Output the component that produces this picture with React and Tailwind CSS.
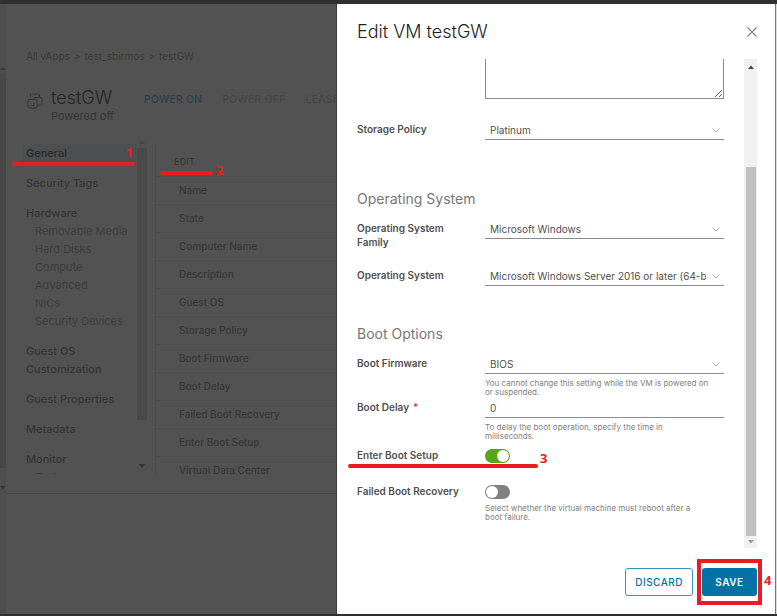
import { useState } from "react";

const navItems = [
  { label: "General", active: true },
  { label: "Security Tags" },
  {
    label: "Hardware",
    children: [
      "Removable Media",
      "Hard Disks",
      "Compute",
      "Advanced",
      "NICs",
      "Security Devices",
    ],
  },
  { label: "Guest OS Customization" },
  { label: "Guest Properties" },
  { label: "Metadata" },
  { label: "Monitor", children: ["Tasks"] },
];

const properties = [
  "Name",
  "State",
  "Computer Name",
  "Description",
  "Guest OS",
  "Storage Policy",
  "Boot Firmware",
  "Boot Delay",
  "Failed Boot Recovery",
  "Enter Boot Setup",
  "Virtual Data Center",
];

function Arrow({ down = false, className = "" }) {
  return (
    <svg viewBox="0 0 6 4" className={`h-1 w-1.5 ${className}`} fill="currentColor">
      <path d={down ? "M0 0h6L3 3.5z" : "M0 4h6L3 0.5z"} />
    </svg>
  );
}

function StepNumber({ children, className }) {
  return (
    <span
      className={`absolute font-['Open_Sans',sans-serif] text-[13px] leading-4 font-bold text-[#e81c24] ${className}`}
    >
      {children}
    </span>
  );
}

function SideNav() {
  return (
    <div className="flex h-[334px] w-[141px] overflow-hidden">
      <nav className="flex-1 pt-1">
        <ul className="space-y-3 text-[11px] leading-[18px] font-medium text-[#363636]">
          {navItems.map((item) => (
            <li key={item.label} className="relative">
              <a
                href="#"
                className={
                  item.active
                    ? "ml-4 block bg-[#4d4f50] pl-1 text-[#2a2a2a]"
                    : "ml-4 block pr-4 pl-1"
                }
              >
                {item.label}
              </a>
              {item.active && (
                <>
                  <span className="absolute -bottom-1 left-1.5 h-1 w-[123px] rounded-full bg-[#e81c24]" />
                  <StepNumber className="right-1 top-0">1</StepNumber>
                </>
              )}
              {item.children && (
                <ul className="pl-[29px] font-normal whitespace-nowrap text-[#3e3e3e]">
                  {item.children.map((child) => (
                    <li key={child}>
                      <a href="#">{child}</a>
                    </li>
                  ))}
                </ul>
              )}
            </li>
          ))}
        </ul>
      </nav>
      {/* Scrollbar */}
      <div className="flex w-2.5 flex-col items-center justify-between text-[#333]">
        <Arrow className="mb-1 text-[#454545]" />
        <div className="w-full flex-1 bg-[#494949]" />
        <Arrow down className="mt-11 mb-1.5" />
      </div>
    </div>
  );
}

function VmPage() {
  return (
    <div className="flex w-[337px] shrink-0 overflow-hidden border-r border-[#3c3c3c] bg-[#525252]">
      <div className="flex w-1.5 shrink-0 flex-col items-center bg-[#4e4e4e] pt-[62px] text-[#333]">
        <Arrow className="text-[#3c3c3c]" />
        <div className="mt-1 mb-[18px] h-[394px] w-full bg-[#484848]" />
        <Arrow down />
      </div>

      <div className="min-w-0 flex-1">
        <div className="h-[490px] border-b border-[#484848]">
          <ol className="flex gap-1 pt-11 pl-5 text-[10px] leading-4 text-[#3b3b3b]">
            <li>All vApps</li>
            <li aria-hidden="true">&gt;</li>
            <li>test_sbirmos</li>
            <li aria-hidden="true">&gt;</li>
            <li>testGW</li>
          </ol>

          <header className="mt-6 flex items-start pl-[21px]">
            <svg
              viewBox="0 0 16 16"
              className="mt-[5px] h-4 w-4 shrink-0 text-[#363636]"
              fill="none"
              stroke="currentColor"
            >
              <rect x="1" y="6.5" width="9" height="8.5" rx="1" />
              <path d="M3.500 4V2a1 1 0 0 1 1-1h7a1 1 0 0 1 1 1v2.500" />
              <path d="M7 6.500V5.500a1 1 0 0 1 1-1h6a1 1 0 0 1 1 1V11a1 1 0 0 1-1 1h-4" />
              <path d="M7 9.500v3M4.500 12.500H7" />
            </svg>
            <div className="ml-2 w-[93px] shrink-0">
              <h1 className="text-lg leading-5 font-light text-[#262626]">testGW</h1>
              <p className="mt-0.5 text-[11px] leading-3 text-[#363636]">Powered off</p>
            </div>
            <div className="flex gap-5 pt-[3px] text-[10px] leading-4 font-medium tracking-wider whitespace-nowrap">
              <button className="text-[#2b414e]">POWER ON</button>
              <button className="text-[#464646]">POWER OFF</button>
              <button className="text-[#464646]">LEASE</button>
            </div>
          </header>

          <div className="mt-[18px] flex">
            <SideNav />
            <div className="mt-1 ml-2 h-[330px] flex-1 overflow-hidden border-l border-[#4c4c4c] pt-2">
              <div className="relative ml-1 h-6">
                <button className="block px-[14px] text-[9px] leading-5 tracking-wide text-[#363636]">
                  EDIT
                </button>
                <span className="absolute bottom-px left-0 h-1 w-[53px] rounded-full bg-[#e81c24]" />
                <StepNumber className="top-2.5 left-14">2</StepNumber>
              </div>
              <table className="w-full text-left text-[10px] text-[#383838]">
                <tbody>
                  {properties.map((name) => (
                    <tr key={name} className="h-7 border-t border-[#4c4c4c]">
                      <th scope="row" className="pl-[23px] font-medium">
                        {name}
                      </th>
                    </tr>
                  ))}
                </tbody>
              </table>
            </div>
          </div>
        </div>
      </div>
    </div>
  );
}

function Row({ label, htmlFor, required, help, className = "", children }) {
  return (
    <div className={`flex ${className}`}>
      <label
        htmlFor={htmlFor}
        className="w-32 shrink-0 pt-0.5 pr-6 text-[10px] leading-[14px] font-semibold text-[#505050]"
      >
        {label}
        {required && <span className="ml-1 text-[#e0404a]">*</span>}
      </label>
      <div className="min-w-0 flex-1">
        {children}
        {help && (
          <p className="mt-[5px] pr-[15px] text-[8px] leading-[9px] text-[#808080]">
            {help}
          </p>
        )}
      </div>
    </div>
  );
}

function Select({ id, value }) {
  return (
    <div className="relative">
      <select
        id={id}
        className="block h-5 w-full appearance-none border-b border-[#8c8c8c] bg-transparent pt-0.5 pr-[18px] pl-[5px] text-[10px] text-[#505050] outline-none"
      >
        <option>{value}</option>
      </select>
      <svg
        viewBox="0 0 8 5"
        className="pointer-events-none absolute top-2 right-1 h-[5px] w-2"
        fill="none"
        stroke="#aaa"
      >
        <path d="M0.500 0.500 4 4 7.500 0.500" />
      </svg>
    </div>
  );
}

function Toggle({ id, checked, onChange }) {
  return (
    <input
      id={id}
      type="checkbox"
      role="switch"
      checked={checked}
      onChange={(e) => onChange(e.target.checked)}
      className="mt-[3px] block h-3.5 w-[25px] appearance-none rounded-full bg-[#808080] p-px before:block before:h-3 before:w-3 before:rounded-full before:bg-white checked:bg-[#57a51b] checked:before:ml-[11px]"
    />
  );
}

function EditVmDialog() {
  const [bootDelay, setBootDelay] = useState("0");
  const [enterSetup, setEnterSetup] = useState(true);
  const [failedRecovery, setFailedRecovery] = useState(false);

  return (
    <div
      role="dialog"
      aria-label="Edit VM testGW"
      className="flex min-w-0 flex-1 flex-col bg-white pr-[18px] pl-5"
    >
      <div className="flex items-start justify-between pt-3.5">
        <h2 className="text-lg leading-7 font-light text-[#222]">Edit VM testGW</h2>
        <button aria-label="Close" className="mt-[9px]">
          <svg viewBox="0 0 10 10" className="h-2.5 w-2.5" stroke="#858585" strokeWidth="1.200">
            <path d="M0.500 0.500l9 9M9.500 0.500l-9 9" />
          </svg>
        </button>
      </div>

      <div className="mt-[13px] flex flex-1">
        <form className="min-w-0 flex-1 pr-5">
          <div className="pl-32">
            <textarea
              aria-label="Description"
              className="block h-10 w-full border border-t-0 border-[#8c8c8c] outline-none"
            />
          </div>
          <Row label="Storage Policy" htmlFor="storage" className="mt-[21px]">
            <Select id="storage" value="Platinum" />
          </Row>

          <h3 className="mt-[49px] text-sm leading-5 text-[#777]">Operating System</h3>
          <Row label="Operating System Family" htmlFor="family" className="mt-2.5">
            <Select id="family" value="Microsoft Windows" />
          </Row>
          <Row label="Operating System" htmlFor="os" className="mt-[17px]">
            <Select id="os" value="Microsoft Windows Server 2016 or later (64-bit)" />
          </Row>

          <h3 className="mt-[38px] text-sm leading-5 text-[#777]">Boot Options</h3>
          <Row
            label="Boot Firmware"
            htmlFor="firmware"
            className="mt-2.5"
            help="You cannot change this setting while the VM is powered on or suspended."
          >
            <Select id="firmware" value="BIOS" />
          </Row>
          <Row
            label="Boot Delay"
            htmlFor="delay"
            required
            className="mt-px"
            help="To delay the boot operation, specify the time in milliseconds."
          >
            <input
              id="delay"
              type="text"
              value={bootDelay}
              onChange={(e) => setBootDelay(e.target.value)}
              className="block h-5 w-full border-b border-[#8c8c8c] pl-[5px] text-[10px] text-[#505050] outline-none"
            />
          </Row>
          <div className="relative">
            <Row label="Enter Boot Setup" htmlFor="setup" className="mt-[5px]">
              <Toggle id="setup" checked={enterSetup} onChange={setEnterSetup} />
            </Row>
            <span className="absolute -bottom-[5px] -left-[9px] h-1 w-[190px] rounded-full bg-[#e81c24]" />
            <StepNumber className="top-1 left-[183px]">3</StepNumber>
          </div>
          <Row
            label="Failed Boot Recovery"
            htmlFor="recovery"
            className="mt-[19px] [&>label]:pr-0"
            help="Select whether the virtual machine must reboot after a boot failure."
          >
            <Toggle id="recovery" checked={failedRecovery} onChange={setFailedRecovery} />
          </Row>
        </form>

        {/* Scrollbar */}
        <div className="flex w-[13px] flex-col items-center bg-[#f1f1f1] py-1 text-[#444]">
          <Arrow className="mt-0.5" />
          <div className="mt-[98px] mb-1 w-2.5 flex-1 bg-[#c1c1c1]" />
          <Arrow down className="text-[#999]" />
        </div>
      </div>

      <div className="flex justify-end gap-[9px] pt-5 pb-[18px] text-[10px] font-semibold tracking-wider">
        <button className="h-7 rounded-[3px] border border-[#3f93b9] px-[9px] font-medium text-[#0072a3]">
          DISCARD
        </button>
        <div className="relative">
          <button className="h-7 min-w-[55px] rounded-[3px] bg-[#0072a3] px-3 text-white">
            SAVE
          </button>
          <span className="pointer-events-none absolute -inset-x-[5px] -inset-y-[9px] border-4 border-[#e81c24]" />
          <StepNumber className="top-1 -right-[15px]">4</StepNumber>
        </div>
      </div>
    </div>
  );
}

export default function App() {
  return (
    <div className="flex min-h-screen flex-col border-t-4 border-b-2 border-[#303030] bg-white font-['Inter',sans-serif]">
      <div className="flex flex-1">
        <VmPage />
        <EditVmDialog />
        <div className="w-0.5 border-l border-[#777] bg-[#ddd]" />
      </div>
    </div>
  );
}
